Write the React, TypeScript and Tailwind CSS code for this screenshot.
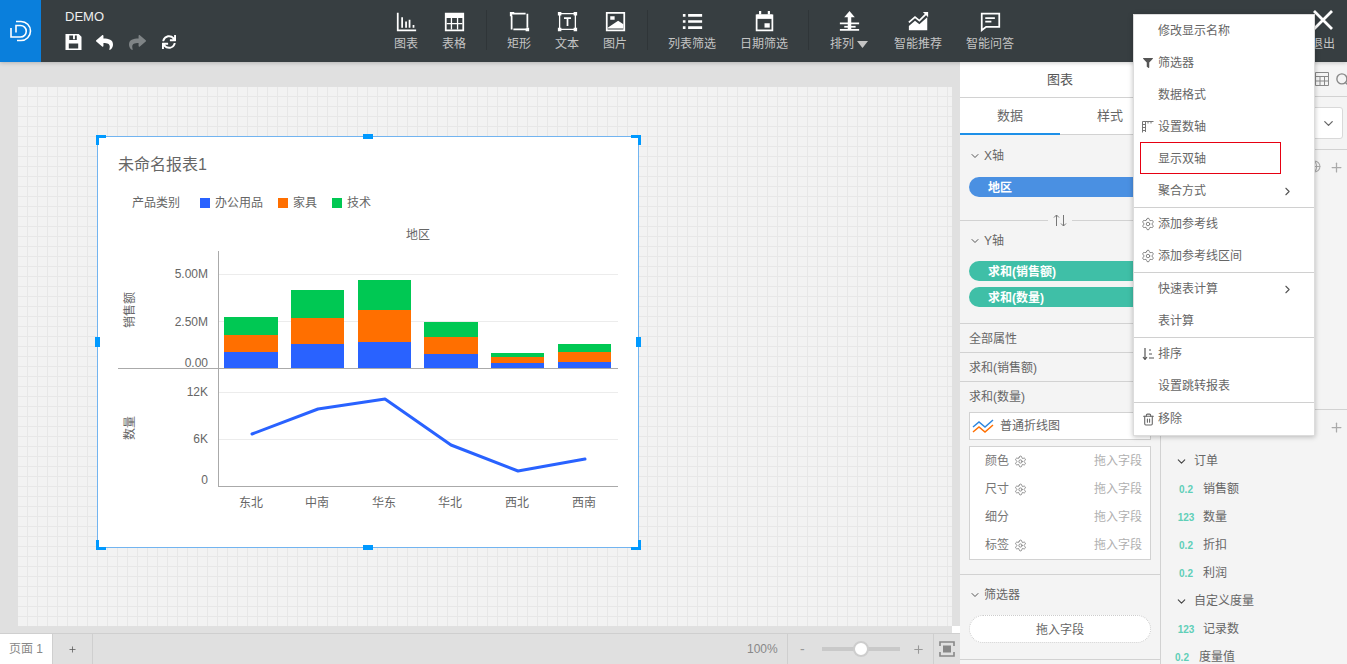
import { ReactNode } from "react";
import { ChevronDown, ChevronRight, Settings, Trash2, Search, Plus, Globe } from "lucide-react";
import { FaReply, FaShare, FaSync, FaFilter, FaCaretDown } from "react-icons/fa";

const font = "font-['Liberation_Sans','Noto_Sans_CJK_SC',sans-serif]";

function Ico({ children }: { children: ReactNode }) {
  return (
    <svg width="21" height="21" viewBox="0 0 24 24" fill="none" stroke="white" strokeWidth="2">
      {children}
    </svg>
  );
}

const toolIcons: Record<string, ReactNode> = {
  chart: (
    <Ico>
      <path d="M2 2v20h21M7 19V7M11.500 19v-7M15.500 19v-9M20 19v-3" />
    </Ico>
  ),
  table: (
    <Ico>
      <path d="M2 3h20v19H2z" />
      <path d="M2 3h20v5H2z" fill="white" stroke="none" />
      <path d="M8.500 8v13M15.500 8v13M3 14.500h18" strokeWidth="1.500" />
    </Ico>
  ),
  rect: (
    <Ico>
      <path d="M3 3h18v18H3z" strokeWidth="2" strokeDasharray="16 2" />
      <path d="M1 1h5v2.500H3.500V6H1zM20 19h3v4h-4v-3h1z" fill="white" stroke="none" />
    </Ico>
  ),
  text: (
    <Ico>
      <path d="M3 3h18v18H3z" strokeWidth="1.500" />
      <path d="M1 1h4v4H1zM19 1h4v4h-4zM1 19h4v4H1zM19 19h4v4h-4z" fill="white" stroke="none" />
      <path d="M8 8h8M12 8v9" />
    </Ico>
  ),
  image: (
    <Ico>
      <path d="M2 2h20v20H2z" />
      <path d="M3 19l12-8 6 4v5H3z" fill="white" stroke="none" />
      <path d="M6 6h5v4H6z" fill="white" stroke="none" />
    </Ico>
  ),
  list: (
    <Ico>
      <path d="M1 5h3M1 12h3M1 19h3M7 5h16M7 12h16M7 19h16" strokeWidth="3" />
    </Ico>
  ),
  calendar: (
    <Ico>
      <path d="M3 5h18v17H3z" />
      <path d="M3 4h18v5H3z" fill="white" stroke="none" />
      <path d="M7 0v4M17 0v4" strokeWidth="2.500" />
      <path d="M12 14h6v5h-6z" fill="white" stroke="none" />
    </Ico>
  ),
  sort: (
    <Ico>
      <path d="M12 0l6 7H6z" fill="white" stroke="none" />
      <path d="M1 14h22M1 21.500h22" strokeWidth="2" />
      <path d="M10 6h4v15h-4z" fill="white" stroke="none" />
      <path d="M6 18h13" strokeWidth="2" />
    </Ico>
  ),
  trend: (
    <Ico>
      <path d="M1 13l7-6 5 4 8-8" />
      <path d="M23 1v6l-6-6z" fill="white" stroke="none" />
      <path d="M1 22v-5l7-6 5 4 9-8v15z" fill="white" stroke="none" />
    </Ico>
  ),
  message: (
    <Ico>
      <path d="M2 3h20v15H7l-5 4z" />
      <path d="M6 8h11M6 12h7" />
    </Ico>
  ),
};

function Tool({ icon, label, w, caret }: { icon: string; label: string; w: string; caret?: boolean }) {
  return (
    <div className={`flex flex-col items-center shrink-0 ${w}`}>
      <div className="h-[24px] mt-[9px] flex items-center justify-center">{toolIcons[icon]}</div>
      <div className="mt-[2px] pt-px text-[12px] leading-[16px] text-[#c4c4c4] flex items-center whitespace-nowrap">
        {label}
        {caret && (
          <svg width="11" height="7" viewBox="0 0 11 7" fill="#c4c4c4" className="ml-[3px]">
            <path d="M0 0h11L5.500 7z" />
          </svg>
        )}
      </div>
    </div>
  );
}

function Sep() {
  return <div className="w-px h-[40px] mt-[10px] mx-[8px] bg-[#2f3538] shrink-0" />;
}

function Pill({ label, color }: { label: string; color: string }) {
  return (
    <div className={`h-[20px] rounded-full pl-[19px] text-[12px] leading-[22px] font-bold text-white ${color}`}>
      {label}
    </div>
  );
}

function SectionHead({ label }: { label: string }) {
  return (
    <div className="flex items-center h-[20px] text-[12px] text-[#666]">
      <ChevronDown size={12} strokeWidth={2} className="mr-[3px] text-[#555]" />
      {label}
    </div>
  );
}

function PropRow({ label }: { label: string }) {
  return <div className="h-[29px] border-b border-[#d2d2d2] pl-[9px] text-[12px] leading-[30px] text-[#666]">{label}</div>;
}

function MarkRow({ label, gear }: { label: string; gear?: boolean }) {
  return (
    <div className="h-[28px] flex items-center pl-[15px] pr-[8px] text-[12px] text-[#777]">
      <span>{label}</span>
      {gear && <Settings size={13} strokeWidth={1.500} className="ml-[5px] text-[#777]" />}
      <span className="ml-auto text-[#b0b0b0]">拖入字段</span>
    </div>
  );
}

function Field({ type, label, shift }: { type: string; label: string; shift?: boolean }) {
  return (
    <div className={`h-[28px] flex items-center text-[12px] text-[#666] ${shift ? "-ml-[4px]" : ""}`}>
      <span className="w-[26px] text-center text-[10px] font-bold text-[#5fcfb8]">{type}</span>
      <span className="ml-[4px]">{label}</span>
    </div>
  );
}

const menuIcons: Record<string, ReactNode> = {
  filter: <FaFilter size={10} className="text-[#555]" />,
  axis: (
    <svg width="12" height="12" viewBox="0 0 12 12" fill="none" stroke="#777" strokeWidth="1">
      <path d="M.5 11.500V.5h11M3.500 1v10M.5 3.500h3M.5 6.500h3M.5 9.500h3M6 .5v2M9 .5v2" />
    </svg>
  ),
  gear: <Settings size={14} strokeWidth={1.500} className="text-[#777]" />,
  sort: (
    <svg width="12" height="12" viewBox="0 0 12 12" fill="none" stroke="#555" strokeWidth="1.200">
      <path d="M3 0v11M1 9l2 2.500L5 9M7 2h2M7 6h3M7 10h5" />
    </svg>
  ),
  trash: <Trash2 size={13} className="text-[#666]" />,
};

type MenuItem = { label: string; icon?: string; more?: boolean; boxed?: boolean };

const menuGroups: MenuItem[][] = [
  [
    { label: "修改显示名称" },
    { label: "筛选器", icon: "filter" },
    { label: "数据格式" },
    { label: "设置数轴", icon: "axis" },
    { label: "显示双轴", boxed: true },
    { label: "聚合方式", more: true },
  ],
  [
    { label: "添加参考线", icon: "gear" },
    { label: "添加参考线区间", icon: "gear" },
  ],
  [{ label: "快速表计算", more: true }, { label: "表计算" }],
  [{ label: "排序", icon: "sort" }, { label: "设置跳转报表" }],
  [{ label: "移除", icon: "trash" }],
];

function ContextMenu() {
  return (
    <div className="absolute left-[1133px] top-[14px] w-[182px] bg-white border border-[#dcdcdc] shadow-[0_1px_5px_rgba(0,0,0,0.25)] z-10">
      {menuGroups.map((group, i) => (
        <div key={i} className={i > 0 ? "border-t border-[#d0d0d0]" : ""}>
          {group.map((item) => (
            <div key={item.label} className="relative h-[32px] flex items-center text-[12px] text-[#666]">
              <span className="w-[24px] flex justify-center pl-[4px] shrink-0">{item.icon && menuIcons[item.icon]}</span>
              {item.label}
              {item.more && <ChevronRight size={13} strokeWidth={2} className="absolute left-[147px] text-[#555]" />}
              {item.boxed && <div className="absolute left-[6px] top-[-1px] w-[141px] h-[32px] border border-[#e60012]" />}
            </div>
          ))}
        </div>
      ))}
    </div>
  );
}

const bars = [
  { x: 224, w: 54, g: 317, o: 335, b: 352 },
  { x: 291, w: 53, g: 290, o: 318, b: 344 },
  { x: 358, w: 53, g: 280, o: 310, b: 342 },
  { x: 424, w: 54, g: 322, o: 337, b: 354 },
  { x: 491, w: 53, g: 353, o: 357, b: 363 },
  { x: 558, w: 53, g: 344, o: 352, b: 362 },
];

const regions = [
  { name: "东北", x: 252 },
  { name: "中南", x: 318 },
  { name: "华东", x: 385 },
  { name: "华北", x: 451 },
  { name: "西北", x: 518 },
  { name: "西南", x: 585 },
];

function Chart() {
  const txt = { fontSize: 12, fill: "#666" };
  return (
    <svg width="540" height="290" viewBox="98 222 540 290" className="mt-[9px] -ml-[20px] block">
      <text x="418" y="238.500" textAnchor="middle" {...txt}>地区</text>
      {[274, 321, 392, 439].map((y) => (
        <line key={y} x1="219" x2="618" y1={y + 0.5} y2={y + 0.5} stroke="#ececec" />
      ))}
      {bars.map((b) => (
        <g key={b.x}>
          <rect x={b.x} y={b.g} width={b.w} height={b.o - b.g} fill="#00c853" />
          <rect x={b.x} y={b.o} width={b.w} height={b.b - b.o} fill="#ff6f00" />
          <rect x={b.x} y={b.b} width={b.w} height={368 - b.b} fill="#2962ff" />
        </g>
      ))}
      <line x1="118" x2="618" y1="368.500" y2="368.500" stroke="#aaa" />
      <line x1="218.500" x2="218.500" y1="251" y2="487" stroke="#aaa" />
      <line x1="218" x2="618" y1="486.500" y2="486.500" stroke="#aaa" />
      {[
        ["5.00M", 278],
        ["2.50M", 325.500],
        ["0.00", 367],
        ["12K", 396],
        ["6K", 443],
        ["0", 484],
      ].map(([t, y]) => (
        <text key={t} x="208" y={y} textAnchor="end" {...txt}>{t}</text>
      ))}
      <text transform="translate(134 310) rotate(-90)" textAnchor="middle" {...txt}>销售额</text>
      <text transform="translate(134 428) rotate(-90)" textAnchor="middle" {...txt}>数量</text>
      <polyline
        points="252,434 318,409 385,399 451,445 518,471 585,459"
        fill="none"
        stroke="#2962ff"
        strokeWidth="3"
        strokeLinejoin="round"
        strokeLinecap="round"
      />
      {regions.map((r) => (
        <text key={r.name} x={r.x - 1} y="507" textAnchor="middle" {...txt}>{r.name}</text>
      ))}
    </svg>
  );
}

function Handle({ className }: { className: string }) {
  return <div className={`absolute bg-[#0099ff] ${className}`} />;
}

export default function App() {
  return (
    <div className={`relative w-[1347px] h-[664px] overflow-hidden flex flex-col bg-[#e0e0e0] ${font}`}>
      {/* top bar */}
      <header className="h-[62px] shrink-0 flex bg-[#373e41] shadow-[0_1px_4px_rgba(0,0,0,0.2)] z-[5]">
        <div className="w-[41px] shrink-0 bg-[#0a7fdc] flex items-center justify-center">
          <svg width="22" height="22" viewBox="0 0 22 22" fill="none" stroke="white" strokeWidth="1.600">
            <path d="M6 1.500h5a9.500 9.500 0 0 1 0 19H7" />
            <path d="M1 8v9h9.500a5.500 5.500 0 0 0 0-11.500H6v7" />
          </svg>
        </div>
        <div className="w-[341px] shrink-0 pl-[24px]">
          <div className="mt-[9px] text-[13px] leading-[16px] text-[#eee]">DEMO</div>
          <div className="mt-[8px] flex items-center h-[18px]">
            <svg width="17" height="16" viewBox="0 0 17 17" fill="white">
              <path fillRule="evenodd" d="M0 0h14l3 3v14H0zM4 1.500v5h8v-5h-2v4H8v-4zM3.500 10v5.500h10V10z" />
            </svg>
            <FaReply size={17} className="ml-[14px] text-white" />
            <FaShare size={17} className="ml-[16px] text-[#7f8486]" />
            <FaSync size={14} className="ml-[16px] text-white" />
          </div>
        </div>
        <Tool icon="chart" label="图表" w="w-[48px]" />
        <Tool icon="table" label="表格" w="w-[48px]" />
        <Sep />
        <Tool icon="rect" label="矩形" w="w-[48px]" />
        <Tool icon="text" label="文本" w="w-[48px]" />
        <Tool icon="image" label="图片" w="w-[48px]" />
        <Sep />
        <Tool icon="list" label="列表筛选" w="w-[72px]" />
        <Tool icon="calendar" label="日期筛选" w="w-[72px]" />
        <Sep />
        <Tool icon="sort" label="排列" w="w-[64px]" caret />
        <Tool icon="trend" label="智能推荐" w="w-[74px]" />
        <Tool icon="message" label="智能问答" w="w-[70px]" />
        <div className="ml-auto w-[48px] flex flex-col items-center">
          <svg width="24" height="24" viewBox="0 0 24 24" fill="none" stroke="white" strokeWidth="2.800" className="mt-[9px]">
            <path d="M3 2l18 18M21 2L3 20" />
          </svg>
          <div className="mt-[2px] pt-px text-[12px] leading-[16px] text-[#c4c4c4]">退出</div>
        </div>
      </header>

      <div className="flex-1 min-h-0 flex">
        {/* canvas */}
        <div className="w-[960px] shrink-0 flex flex-col">
          <div className="relative flex-1 min-h-0 pl-[18px] pt-[25px] pr-[8px] pb-[7px]">
            <div className="h-full bg-[#f2f2f2] bg-[linear-gradient(90deg,transparent_9px,#e7e7e7_9px),linear-gradient(transparent_9px,#e7e7e7_9px)] bg-[size:10px_10px] pl-[79px] pt-[49px]">
              <div className="relative w-[542px] h-[412px] bg-white border border-[#72b4f0] pl-[20px] pt-[17px]">
                <Handle className="left-[-2px] top-[-2px] w-[10px] h-[3px]" />
                <Handle className="left-[-2px] top-[-2px] w-[3px] h-[10px]" />
                <Handle className="right-[-3px] top-[-2px] w-[10px] h-[3px]" />
                <Handle className="right-[-3px] top-[-2px] w-[3px] h-[10px]" />
                <Handle className="left-[-2px] bottom-[-3px] w-[10px] h-[3px]" />
                <Handle className="left-[-2px] bottom-[-3px] w-[3px] h-[10px]" />
                <Handle className="right-[-3px] bottom-[-3px] w-[10px] h-[3px]" />
                <Handle className="right-[-3px] bottom-[-3px] w-[3px] h-[10px]" />
                <Handle className="left-[265px] top-[-3px] w-[10px] h-[5px]" />
                <Handle className="left-[265px] bottom-[-3px] w-[10px] h-[5px]" />
                <Handle className="left-[-3px] top-[200px] w-[5px] h-[10px]" />
                <Handle className="right-[-3px] top-[200px] w-[5px] h-[10px]" />

                <div className="text-[16px] leading-[22px] text-[#666]">未命名报表1</div>
                <div className="mt-[17px] ml-[14px] flex items-center h-[20px] text-[12px] text-[#666]">
                  <span>产品类别</span>
                  <i className="w-[10px] h-[10px] bg-[#2962ff] ml-[20px]" />
                  <span className="ml-[5px]">办公用品</span>
                  <i className="w-[10px] h-[10px] bg-[#ff6f00] ml-[15px]" />
                  <span className="ml-[5px]">家具</span>
                  <i className="w-[10px] h-[10px] bg-[#00c853] ml-[15px]" />
                  <span className="ml-[5px]">技术</span>
                </div>
                <Chart />
              </div>
            </div>
            <div className="absolute right-0 bottom-0 w-[8px] h-[7px] bg-white" />
          </div>
          <footer className="h-[31px] shrink-0 flex border-t border-[#cfcfcf] text-[12px] text-[#888]">
            <div className="w-[52px] bg-white flex items-center justify-center">页面 1</div>
            <div className="w-[41px] border-x border-[#cfcfcf] flex items-center justify-center text-[#555]">
              <Plus size={9} strokeWidth={2} />
            </div>
            <div className="ml-auto w-[40px] flex items-center">100%</div>
            <div className="w-[146px] border-l border-[#cfcfcf] flex items-center pl-[12px] text-[#999]">
              <span className="text-[14px] w-[10px]">-</span>
              <div className="relative ml-[12px] w-[78px] h-[4px] bg-[#c9c9c9]">
                <div className="absolute left-[31px] top-[-6px] w-[16px] h-[16px] rounded-full bg-white border-2 border-[#cdcdcd]" />
              </div>
              <Plus size={13} strokeWidth={2} className="ml-[12px]" />
            </div>
            <div className="w-[27px] border-l border-[#cfcfcf] flex items-center justify-center">
              <svg width="16" height="16" viewBox="0 0 16 16" fill="none" stroke="#888" strokeWidth="1.600">
                <path d="M1 5V1h14v4M1 11v4h14v-4" />
                <path d="M4 4.500h8v7H4z" fill="#888" stroke="none" />
              </svg>
            </div>
          </footer>
        </div>

        {/* properties panel */}
        <aside className="w-[201px] shrink-0 bg-[#f4f4f4] border-r border-[#d2d2d2] flex flex-col overflow-hidden">
          <div className="h-[36px] shrink-0 bg-white border-b border-[#d2d2d2] text-center text-[13px] leading-[35px] text-[#555]">图表</div>
          <div className="h-[37px] shrink-0 bg-white border-b border-[#d2d2d2] flex text-[13px] text-[#666]">
            <div className="w-[100px] h-[37px] border-b-2 border-[#1e90e8] text-center leading-[35px]">数据</div>
            <div className="w-[100px] text-center leading-[35px]">样式</div>
          </div>
          <div className="h-[85px] shrink-0 pt-[11px] px-[9px]">
            <SectionHead label="X轴" />
            <div className="mt-[11px]">
              <Pill label="地区" color="bg-[#4a90e2]" />
            </div>
          </div>
          <div className="h-[1px] shrink-0 relative bg-[#d2d2d2]">
            <div className="absolute left-[88px] top-[-8px] w-[24px] h-[16px] bg-[#f4f4f4] flex items-center justify-center">
              <svg width="14" height="13" viewBox="0 0 14 13" fill="none" stroke="#777" strokeWidth="1">
                <path d="M3.500 12V1M1 3.500L3.500 1 6 3.500M10.500 1v11M8 9.500l2.500 2.500L13 9.500" />
              </svg>
            </div>
          </div>
          <div className="h-[103px] shrink-0 pt-[10px] px-[9px] border-b border-[#d2d2d2]">
            <SectionHead label="Y轴" />
            <div className="mt-[10px]">
              <Pill label="求和(销售额)" color="bg-[#3fbfa7]" />
            </div>
            <div className="mt-[6px]">
              <Pill label="求和(数量)" color="bg-[#3fbfa7]" />
            </div>
          </div>
          <PropRow label="全部属性" />
          <PropRow label="求和(销售额)" />
          <div className="h-[193px] shrink-0 border-b border-[#d2d2d2] px-[9px] flex flex-col">
            <div className="h-[30px] shrink-0 text-[12px] leading-[30px] text-[#666]">求和(数量)</div>
            <div className="h-[28px] shrink-0 bg-white border border-[#d2d2d2] flex items-center pl-[2px] pr-[6px] text-[12px] text-[#666]">
              <svg width="24" height="16" viewBox="0 0 24 16" fill="none" strokeWidth="1.500" className="mr-[4px]">
                <path d="M1 9l6-5 6 5 8-7" stroke="#2e86de" />
                <path d="M1 14l6-5 6 5 8-7" stroke="#ff6f00" />
              </svg>
              普通折线图
              <FaCaretDown size={12} className="ml-auto text-[#999]" />
            </div>
            <div className="mt-[6px] h-[114px] shrink-0 bg-white border border-[#d2d2d2]">
              <MarkRow label="颜色" gear />
              <MarkRow label="尺寸" gear />
              <MarkRow label="细分" />
              <MarkRow label="标签" gear />
            </div>
          </div>
          <div className="h-[85px] shrink-0 pt-[10px] px-[9px] border-b border-[#d2d2d2]">
            <SectionHead label="筛选器" />
            <div className="mt-[10px] h-[28px] bg-white rounded-full border border-dotted border-[#ccc] text-center text-[12px] leading-[28px] text-[#666]">
              拖入字段
            </div>
          </div>
        </aside>

        {/* field list */}
        <aside className="flex-1 min-w-0 bg-[#f4f4f4] flex flex-col overflow-hidden">
          <div className="h-[35px] shrink-0 border-b border-[#d2d2d2] flex items-center gap-[6px] pl-[154px]">
            <svg width="14" height="14" viewBox="0 0 14 14" fill="none" stroke="#888" strokeWidth="1" className="shrink-0">
              <path d="M.5 .5h13v13H.5zM.5 4.500h13M.5 9h13M5 4.500v9M9.500 4.500v9" />
            </svg>
            <Search size={15} strokeWidth={2.200} className="shrink-0 text-[#888]" />
          </div>
          <div className="h-[53px] shrink-0 border-b border-[#d2d2d2] flex items-center justify-end pr-[4px]">
            <div className="w-[40px] h-[32px] bg-white border border-[#d9d9d9] rounded-[3px] flex items-center justify-end pr-[6px]">
              <ChevronDown size={15} className="text-[#666]" />
            </div>
          </div>
          <div className="h-[260px] shrink-0 border-b border-[#d2d2d2] pt-[10px] flex justify-end items-start gap-[8px] pr-[3px] text-[#aaa]">
            <Globe size={13} />
            <Plus size={15} />
          </div>
          <div className="relative flex-1 pl-[12px] pt-[37px]">
            <Plus size={15} className="absolute right-[3px] top-[10px] text-[#aaa]" />
            <div className="h-[28px] flex items-center text-[12px] text-[#666]">
              <ChevronDown size={13} strokeWidth={2} className="ml-[2px] mr-[6px] text-[#444]" />
              订单
            </div>
            <Field type="0.2" label="销售额" />
            <Field type="123" label="数量" />
            <Field type="0.2" label="折扣" />
            <Field type="0.2" label="利润" />
            <div className="h-[28px] flex items-center text-[12px] text-[#666]">
              <ChevronDown size={13} strokeWidth={2} className="ml-[2px] mr-[6px] text-[#444]" />
              自定义度量
            </div>
            <Field type="123" label="记录数" />
            <Field type="0.2" label="度量值" shift />
          </div>
        </aside>
      </div>

      <ContextMenu />
    </div>
  );
}
